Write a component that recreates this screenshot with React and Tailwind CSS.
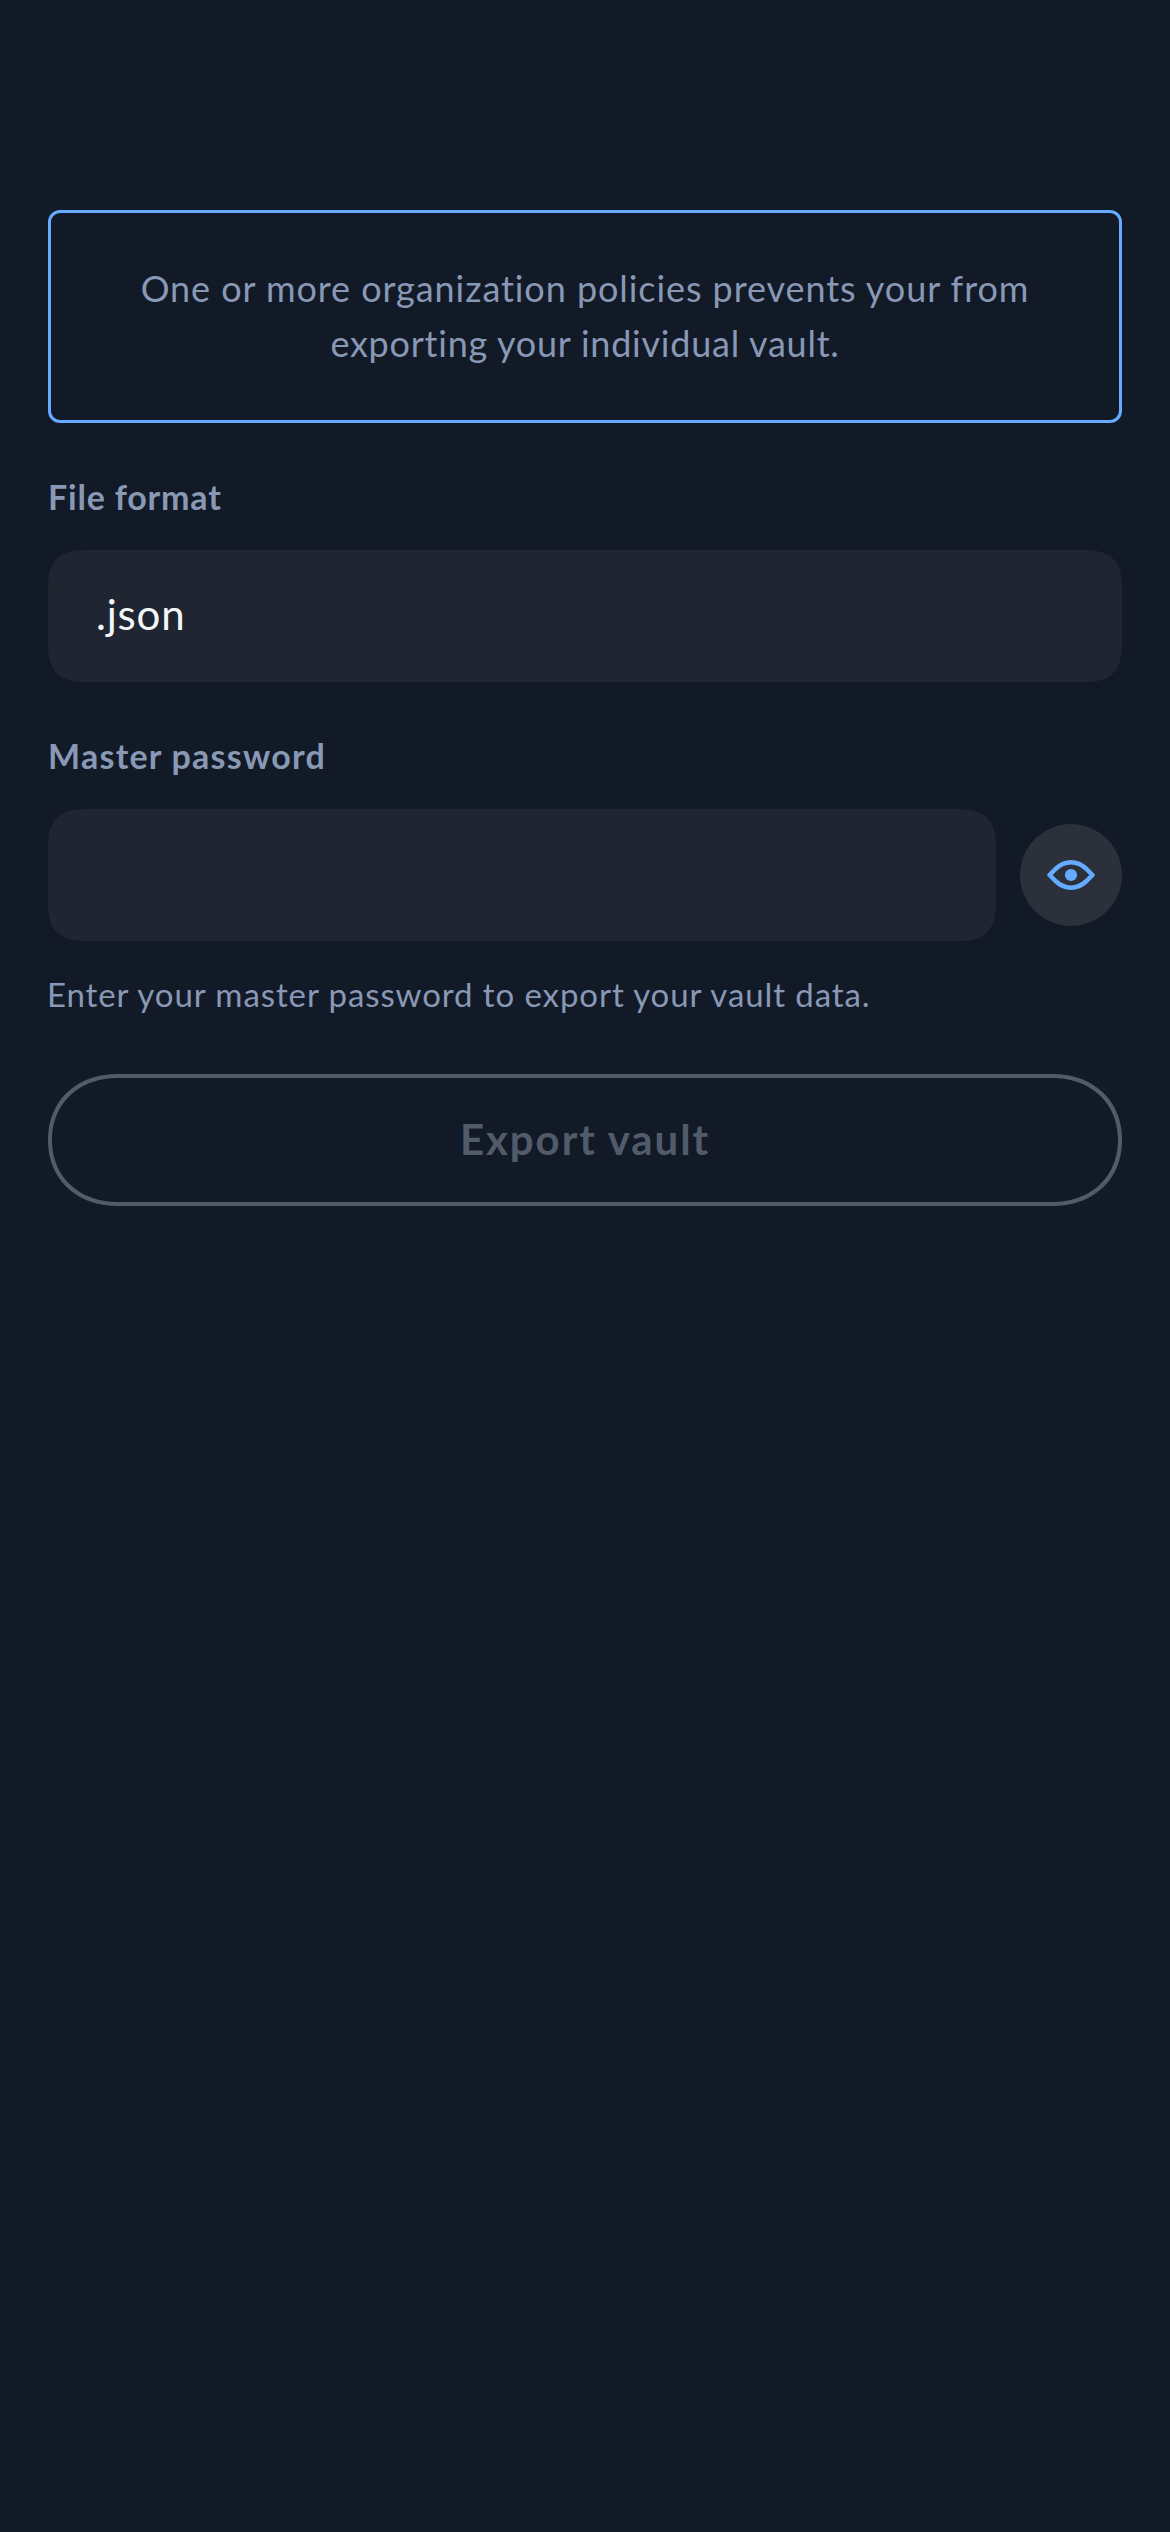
import React from "react";

function EyeIcon() {
  return (
    <svg className="h-[30px] w-12" viewBox="0 0 48 30" fill="none" aria-hidden="true">
      <path
        d="M2.600 15L8.500 9C13.500 4.300 18 2.300 24 2.300S34.500 4.300 39.500 9L45.400 15L39.500 21C34.500 25.700 30 27.700 24 27.700S13.500 25.700 8.500 21Z"
        stroke="#65abff"
        strokeWidth="4.6"
        strokeLinejoin="round"
      />
      <circle cx="24" cy="15" r="6.1" fill="#65abff" />
    </svg>
  );
}

export default function App() {
  return (
    <main className="flex min-h-[2532px] w-full flex-col bg-[#121a27] px-12 pt-[210px] font-['Lato',sans-serif] text-[#8898b5] [font-variant-ligatures:none]">
      <p className="rounded-xl border-[3px] border-[#65abff] px-12 pt-12 pb-[49px] text-center text-[36px] leading-[55px]">
        <span className="tracking-[0.93px]">One or more organization policies prevents your from</span>
        <br />
        <span className="tracking-[0.76px]">exporting your individual vault.</span>
      </p>

      <section className="mt-[54px] flex flex-col gap-[33px]">
        <h2 className="text-[34px] leading-10 font-bold tracking-[0.8px]">File format</h2>
        <button className="flex h-[132px] items-center rounded-[42px] bg-[#202631] px-12 pb-1 text-left text-[42px] tracking-[0.8px] text-[#f3f6f9] [corner-shape:superellipse(1.55)]">
          .json
        </button>
      </section>

      <section className="mt-[54px] flex flex-col gap-[33px]">
        <label htmlFor="master-password" className="text-[34px] leading-10 font-bold tracking-[1.25px]">
          Master password
        </label>
        <div className="flex items-center gap-6">
          <input
            id="master-password"
            type="password"
            className="h-[132px] min-w-0 flex-1 rounded-[42px] bg-[#202631] px-12 text-[42px] text-[#f3f6f9] outline-none [corner-shape:superellipse(1.55)]"
          />
          <button aria-label="Show password" className="flex size-[102px] items-center justify-center rounded-full bg-[#2b303b]">
            <EyeIcon />
          </button>
        </div>
        <p className="-ml-px text-[33px] leading-10 tracking-[0.91px]">Enter your master password to export your vault data.</p>
      </section>

      <button
        disabled
        className="mt-[60px] flex h-[132px] items-center justify-center rounded-[70px/66px] border-[4.5px] border-[#525b6a] pb-0.5 text-[42px] font-bold tracking-[1.9px] text-[#525b6a] [corner-shape:superellipse(1.1)]"
      >
        Export vault
      </button>
    </main>
  );
}
